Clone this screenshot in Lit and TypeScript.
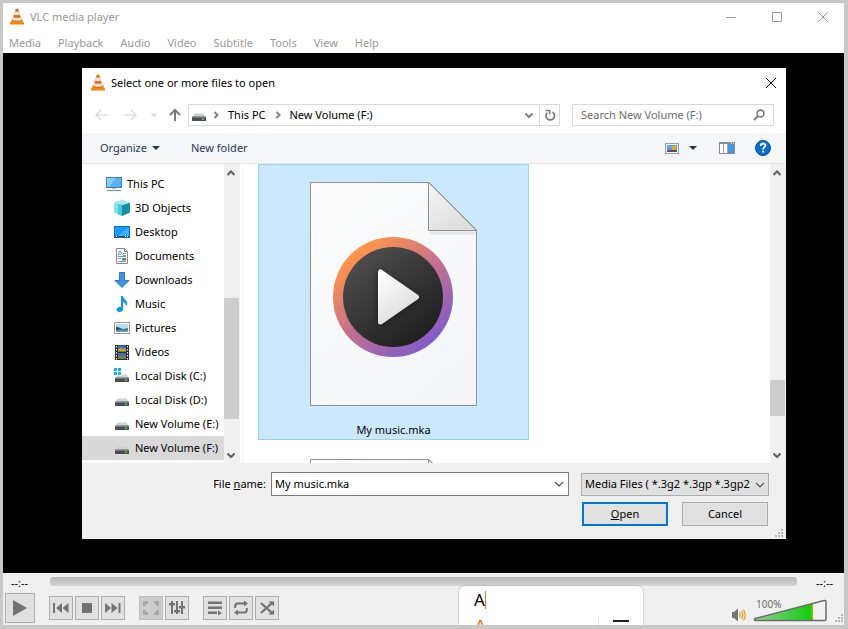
import { LitElement, html, css, svg, TemplateResult } from "lit";
import { customElement, property } from "lit/decorators.js";
import { classMap } from "lit/directives/class-map.js";
import { styleMap } from "lit/directives/style-map.js";

const cone = html`<svg width="16" height="18" viewBox="0 0 16 18" aria-hidden="true">
  <path d="M3 10.500h10L15 15.500H1z" fill="#f7a21f"/>
  <path d="M1 14.500h14V16.500H1z" fill="#e8850f"/>
  <path d="M6.800.8h2.400l3.800 12.200c-2 1.600-8 1.600-10 0z" fill="#ea6c10"/>
  <path d="M5.900 3.800h4.200l1 3c-1.600.6-4.600.6-6.200 0z" fill="#e9e9e9"/>
  <path d="M4.100 9.200c2 .8 5.800.8 7.800 0l.9 2.700c-2.400 1.100-7.200 1.100-9.600 0z" fill="#dfe3e6"/>
</svg>`;

const drive = html`<svg width="16" height="16" viewBox="0 0 16 16" aria-hidden="true">
  <path d="M3.500 6.500h9l2.300 3.500H1.200z" fill="#cfd2d4"/>
  <rect x="1" y="9.500" width="14" height="4.500" rx=".6" fill="#4b4d50"/>
  <path d="M1 9.500h14v1H1z" fill="#a5a8ab"/>
  <rect x="11" y="11.500" width="2" height="1.500" fill="#3fe04a"/>
</svg>`;

const systemDrive = html`<svg width="16" height="16" viewBox="0 0 16 16" aria-hidden="true">
  <path d="M0 0h3v3H0zM4 0h3v3H4zM0 4h3v3H0zM4 4h3v3H4z" fill="#19b5ea"/>
  <path d="M8 6.500h4.500l2.300 3.500H1.200L2.800 8H8z" fill="#cfd2d4"/>
  <rect x="1" y="9.500" width="14" height="4.500" rx=".6" fill="#4b4d50"/>
  <path d="M1 9.500h14v1H1z" fill="#a5a8ab"/>
  <rect x="11" y="11.500" width="2" height="1.500" fill="#3fe04a"/>
</svg>`;

const picture = html`<svg width="16" height="16" viewBox="0 0 16 16" aria-hidden="true">
  <rect x=".5" y="2.500" width="15" height="11" fill="#fff" stroke="#9a9a9a"/>
  <path d="M2 4h12v4H2z" fill="#b5daf5"/>
  <path d="M2 7l4 .8 3 1L14 8v4H2z" fill="#3f7f8c"/>
  <path d="M2 6.500l3.500 1.500L8 9.500 2 10z" fill="#2d5b4c"/>
  <path d="M2 10.500h12V12H2z" fill="#6aa9d4"/>
</svg>`;

const treeIcons: Record<string, TemplateResult> = {
  pc: html`<svg width="16" height="16" viewBox="0 0 16 16" aria-hidden="true">
    <rect x=".5" y="1.500" width="15" height="10" fill="#56b4f5" stroke="#4d7ea6"/>
    <path d="M1 2h9L3 11H1z" fill="#86cdfa"/>
    <path d="M6 12h4v1H6z" fill="#9fc0d8"/>
    <path d="M1 14.500h14" stroke="#6d8dab"/>
  </svg>`,
  cube: html`<svg width="16" height="16" viewBox="0 0 16 16" aria-hidden="true">
    <path d="M0 2.500L8 5v11l-8-3.500z" fill="#7de0ea"/>
    <path d="M8 5l8-2.500v10L8 16z" fill="#1291a8"/>
    <path d="M8 0l8 2.500L8 5 0 2.500z" fill="#a3e6ec"/>
    <path d="M4 4l4 1v11l-4-1.800z" fill="#45c8d8"/>
  </svg>`,
  desktop: html`<svg width="16" height="16" viewBox="0 0 16 16" aria-hidden="true">
    <rect x=".5" y="2.500" width="15" height="11" fill="#1b9bf8" stroke="#0c6cc0"/>
    <path d="M15 3v9H4z" fill="#3fb0ff"/>
    <path d="M1 12.500h14" stroke="#083a66"/>
    <path d="M2 12.500h1m8 0h1m1 0h1" stroke="#fff"/>
  </svg>`,
  document: html`<svg width="16" height="16" viewBox="0 0 16 16" aria-hidden="true">
    <path d="M2.500.5h8l3 3v12h-11z" fill="#fff" stroke="#8a8a8a"/>
    <path d="M10.500.5v3h3" fill="none" stroke="#8a8a8a"/>
    <path d="M4 6.500h3M9 5.500h3M9 7.500h3M4 8.500h8M4 13.500h8" stroke="#7b95aa"/>
    <path d="M4.500 5.500L6 3l1.500 2.500" fill="none" stroke="#2a7fc4"/>
    <path d="M4 10.500h3" stroke="#7b95aa"/><path d="M8 10h4v2.500H8z" fill="#4d8f86"/>
  </svg>`,
  download: html`<svg width="16" height="16" viewBox="0 0 16 16" aria-hidden="true">
    <path d="M5.500.5h5v8h4.500L8 15.500 1 8.500h4.500z" fill="#3c94e4" stroke="#2c78c4"/>
  </svg>`,
  music: html`<svg width="16" height="16" viewBox="0 0 16 16" aria-hidden="true">
    <path d="M7 0h2c.3 3 4.500 4.500 4.200 7.500-.1 1.300-.8 2.200-1.500 2.800.6-2.500-.8-3.800-2.700-4.300V13c0 1.800-1.500 3-3.500 3S2.500 15 2.500 13.600s1.500-2.600 3-2.600c.6 0 1.100.1 1.500.3z" fill="#1294ea"/>
  </svg>`,
  picture,
  video: html`<svg width="16" height="16" viewBox="0 0 16 16" aria-hidden="true">
    <path d="M1 1h14v15H1z" fill="#2e2e2e"/>
    <path d="M4 1.500h8v6H4zM4 9h8v6H4z" fill="#3b6fc4"/>
    <path d="M4 5.500l3-2 2 1.500 3-1v3.500H4z" fill="#c8a021"/>
    <path d="M4 12l4-1 4 2v2H4z" fill="#6a7e49"/>
    <path d="M2.500 2v14M13.500 2v14" stroke="#f0f0f0" stroke-dasharray="1.500 1.500"/>
  </svg>`,
  system: systemDrive,
  drive,
};

const chevron = (direction: "up" | "down" | "right", color = "#606060") => {
  const d = { up: "M1.500 7L5 3.500 8.500 7", down: "M1.500 3.500L5 7l3.500-3.500", right: "M3.500 2L6.500 5l-3 3" }[direction];
  return html`<svg width="10" height="10" viewBox="0 0 10 10" aria-hidden="true">
    <path d=${d} fill="none" stroke=${color} stroke-width="2"/>
  </svg>`;
};

const thinChevron = html`<svg width="10" height="10" viewBox="0 0 10 10" aria-hidden="true">
  <path d="M1 3l4 4 4-4" fill="none" stroke="#505050" stroke-width="1.200"/>
</svg>`;

const caret = html`<svg width="8" height="6" viewBox="0 0 8 6" aria-hidden="true">
  <path d="M0 1h8L4 5z" fill="#1e395b"/>
</svg>`;

const grip = html`<svg width="9" height="9" viewBox="0 0 9 9" aria-hidden="true">
  <path d="M6 0h2v2H6zM3 3h2v2H3zM6 3h2v2H6zM0 6h2v2H0zM3 6h2v2H3zM6 6h2v2H6z" fill="#b8b8b8"/>
</svg>`;

const base = css`
  *, *::before, *::after { box-sizing: border-box; }
  :host { font-family: "Noto Sans", "Open Sans", sans-serif; font-size: 11px; line-height: 16px; }
  button, input, select { font: inherit; color: inherit; margin: 0; padding: 0; border: 0; border-radius: 0; background: none; outline: none; }
  button { display: flex; align-items: center; justify-content: center; white-space: nowrap; }
  svg { display: block; flex: none; }
`;

@customElement("scroll-bar")
export class ScrollBar extends LitElement {
  @property({ type: Number }) before = 1;
  @property({ type: Number }) thumb = 1;
  @property({ type: Number }) after = 1;

  static styles = [base, css`
    :host { display: flex; flex-direction: column; flex: none; width: 16px; background: #f0f0f0; }
    button { width: 14px; height: 17px; flex: none; }
    .thumb { width: 15px; background: #cdcdcd; }
  `];

  render() {
    return html`
      <button aria-label="Scroll up">${chevron("up")}</button>
      <div style=${styleMap({ flexGrow: String(this.before) })}></div>
      <div class="thumb" style=${styleMap({ flexGrow: String(this.thumb) })}></div>
      <div style=${styleMap({ flexGrow: String(this.after) })}></div>
      <button aria-label="Scroll down">${chevron("down")}</button>`;
  }
}

@customElement("file-tile")
export class FileTile extends LitElement {
  @property() name = "";
  @property({ type: Boolean, reflect: true }) selected = false;

  static styles = [base, css`
    :host { display: block; width: 271px; flex: none; }
    .tile { width: 100%; height: 276px; flex-direction: column; justify-content: flex-start; padding-top: 17px; gap: 16px; border: 1px solid transparent; color: #000; }
    .selected { background: #cce8ff; border-color: #99d1ff; }
  `];

  render() {
    return html`<button class=${classMap({ tile: true, selected: this.selected })}>
      <svg width="167" height="224" viewBox="0 0 167 224" aria-hidden="true">
        <defs>
          <linearGradient id="paper" x1="0" y1="0" x2=".6" y2="1"><stop stop-color="#fdfdfd"/><stop offset="1" stop-color="#f3f5f8"/></linearGradient>
          <linearGradient id="fold" x1="0" y1="0" x2=".7" y2="1"><stop stop-color="#f6f6f6"/><stop offset="1" stop-color="#dcdcdc"/></linearGradient>
          <linearGradient id="ring" x1=".2" y1=".12" x2=".8" y2=".88"><stop stop-color="#ff954a"/><stop offset=".5" stop-color="#c4708e"/><stop offset="1" stop-color="#855dc8"/></linearGradient>
          <linearGradient id="disc" x1=".2" y1=".1" x2=".8" y2=".9"><stop stop-color="#4b4b4b"/><stop offset="1" stop-color="#1f1f1f"/></linearGradient>
          <linearGradient id="play" x1="0" y1="0" x2=".5" y2="1"><stop stop-color="#fff"/><stop offset="1" stop-color="#dedede"/></linearGradient>
          <filter id="shade" x="-30%" y="-30%" width="160%" height="160%"><feDropShadow dx="0" dy="1" stdDeviation="3" flood-color="#000" flood-opacity=".5"/></filter>
        </defs>
        <path d="M.5.5h118.500l47.500 47.500v175.500H.5z" fill="url(#paper)" stroke="#8e9194"/>
        <path d="M119 49.500h47l-1 3h-44z" fill="#000" opacity=".08"/>
        <path d="M118.500.5v48h48z" fill="url(#fold)" stroke="#8e8e8e"/>
        <circle cx="83" cy="115" r="60" fill="url(#ring)"/>
        <circle cx="83" cy="115" r="50" fill="url(#disc)"/>
        <path d="M70.500 90v50l36-25z" fill="url(#play)" stroke="url(#play)" stroke-width="5" stroke-linejoin="round" filter="url(#shade)"/>
      </svg>
      <span>${this.name}</span>
    </button>`;
  }
}

const places = [
  ["pc", "This PC"], ["cube", "3D Objects"], ["desktop", "Desktop"], ["document", "Documents"],
  ["download", "Downloads"], ["music", "Music"], ["picture", "Pictures"], ["video", "Videos"],
  ["system", "Local Disk (C:)"], ["drive", "Local Disk (D:)"], ["drive", "New Volume (E:)"], ["drive", "New Volume (F:)"],
];

@customElement("open-dialog")
export class OpenDialog extends LitElement {
  static styles = [base, css`
    :host { display: flex; flex-direction: column; position: relative; background: #fff; color: #000; min-width: 0; }
    .title { display: flex; align-items: center; height: 30px; padding: 0 9px 0 8px; gap: 5px; }
    .title h2 { flex: 1; margin: 0; font-size: 11px; font-weight: 400; }
    .close { width: 12px; height: 12px; }
    .nav { display: flex; align-items: center; height: 35px; padding: 0 12px 2px 4px; }
    .step { width: 30px; height: 22px; }
    .recent { width: 16px; height: 22px; }
    .up { width: 26px; height: 22px; }
    .path { display: flex; align-items: center; flex: 1; height: 22px; border: 1px solid #d9d9d9; padding-left: 2px; }
    .path > svg:first-of-type { margin-right: 4px; }
    .crumb { padding: 0 7px; }
    .drop { margin-left: auto; width: 20px; height: 20px; }
    .refresh { width: 20px; height: 20px; border-left: 1px solid #d9d9d9; }
    .search { display: flex; align-items: center; width: 202px; height: 22px; margin-left: 12px; padding: 0 8px; border: 1px solid #d9d9d9; }
    .search input { flex: 1; min-width: 0; }
    .search input::placeholder { color: #6d6d6d; opacity: 1; }
    .tools { display: flex; align-items: center; height: 31px; padding: 0 15px 0 18px; background: #f5f6f7; border-bottom: 1px solid #e5e6e8; color: #1e395b; }
    .organize { gap: 5px; margin-right: 31px; }
    .view { gap: 10px; margin-left: auto; }
    .preview { margin: 0 20px 0 22px; }
    .body { display: flex; flex: 1 1 0; min-height: 0; overflow: hidden; }
    .tree { width: 142px; flex: none; padding: 8px 0 0; margin: 0; list-style: none; }
    .place { width: 100%; height: 24px; justify-content: flex-start; gap: 5px; padding-left: 32px; }
    .root { padding-left: 24px; }
    .current { background: #d9d9d9; }
    .files { flex: 1; min-width: 0; display: flex; flex-direction: column; gap: 1px; margin-left: 2px; padding-left: 15px; border-left: 1px solid #f5f5f5; overflow: hidden; }
    .foot { position: relative; display: flex; flex-direction: column; gap: 6px; height: 76px; padding: 9px 17px 0 0; background: #f0f0f0; }
    .row { display: flex; align-items: center; }
    .name-label { width: 184px; text-align: right; margin-right: 5px; }
    .combo { display: flex; flex: 1; height: 24px; background: #fff; border: 1px solid #7a7a7a; margin-right: 12px; }
    .combo input { flex: 1; min-width: 0; padding-left: 3px; }
    .combo button { width: 18px; }
    .type { position: relative; width: 188px; }
    .type select { appearance: none; display: block; width: 100%; height: 23px; padding: 0 18px 0 3px; background: #e1e1e1; border: 1px solid #adadad; }
    .type svg { position: absolute; right: 4px; top: 7px; pointer-events: none; }
    .actions { justify-content: flex-end; gap: 14px; padding-right: 1px; }
    .action { width: 86px; height: 24px; background: #e1e1e1; border: 1px solid #adadad; }
    .primary { border: 2px solid #0078d7; }
    .grip { position: absolute; right: 2px; bottom: 1px; }
  `];

  render() {
    return html`
      <div class="title">${cone}<h2>Select one or more files to open</h2>
        <button class="close" aria-label="Close"><svg width="12" height="12" viewBox="0 0 12 12"><path d="M1 1l10 10M11 1L1 11" stroke="#000"/></svg></button>
      </div>
      <div class="nav">
        <button class="step" aria-label="Back"><svg width="14" height="14" viewBox="0 0 14 14"><path d="M13 7H2M7 2L2 7l5 5" fill="none" stroke="#dadada" stroke-width="1.500"/></svg></button>
        <button class="step" aria-label="Forward"><svg width="14" height="14" viewBox="0 0 14 14"><path d="M1 7h11M7 2l5 5-5 5" fill="none" stroke="#dadada" stroke-width="1.500"/></svg></button>
        <button class="recent" aria-label="Recent locations"><svg width="8" height="8" viewBox="0 0 8 8"><path d="M1.500 2.500L4 5l2.500-2.500" fill="none" stroke="#d4d4d4" stroke-width="1.500"/></svg></button>
        <button class="up" aria-label="Up"><svg width="14" height="14" viewBox="0 0 14 14"><path d="M7 13V2M2 7l5-5 5 5" fill="none" stroke="#7a7a7a" stroke-width="2"/></svg></button>
        <div class="path">
          ${drive}${chevron("right", "#808080")}
          <button class="crumb">This PC</button>${chevron("right", "#808080")}
          <button class="crumb">New Volume (F:)</button>
          <button class="drop" aria-label="Previous locations">${chevron("down", "#808080")}</button>
          <button class="refresh" aria-label="Refresh"><svg width="12" height="14" viewBox="0 0 12 14"><path d="M8.500 4A4.300 4.300 0 1 1 3.300 4.500" fill="none" stroke="#7a7a7a" stroke-width="1.700"/><path d="M1.500 2.500h4.200v4" fill="none" stroke="#7a7a7a" stroke-width="1.500"/></svg></button>
        </div>
        <label class="search"><input aria-label="Search" placeholder="Search New Volume (F:)">
          <svg width="12" height="12" viewBox="0 0 12 12"><circle cx="7.500" cy="4.500" r="3.400" fill="none" stroke="#7a7a7a" stroke-width="1.600"/><path d="M5 7L1 11" stroke="#7a7a7a" stroke-width="2"/></svg>
        </label>
      </div>
      <div class="tools">
        <button class="organize">Organize ${caret}</button>
        <button>New folder</button>
        <button class="view" aria-label="Change view"><svg width="14" height="11" viewBox="0 0 14 11"><rect x=".5" y=".5" width="13" height="10" fill="#fff" stroke="#9a9a9a"/><path d="M2 2h10v7H2z" fill="#5aa5e6"/><path d="M2 7h10v2H2z" fill="#44536c"/><path d="M7 3h4v4H7z" fill="#d9b02a"/><path d="M3 6h2v2H3z" fill="#a64b9e"/></svg>${caret}</button>
        <button class="preview" aria-label="Preview pane"><svg width="16" height="12" viewBox="0 0 16 12"><rect x=".5" y=".5" width="15" height="11" fill="#fff" stroke="#858c92"/><path d="M0 0h16v2H0z" fill="#858c92"/><path d="M4.500 2v9M8.500 2v9" stroke="#a5abb0"/><path d="M9 2h6v9H9z" fill="#3e97e0"/><path d="M12 1h1m1 0h1" stroke="#fff"/></svg></button>
        <button aria-label="Help"><svg width="16" height="16" viewBox="0 0 16 16"><circle cx="8" cy="8" r="7.500" fill="#0a6cce" stroke="#064e9c"/><path d="M5.700 5.900c0-3.200 4.900-3.100 4.700-.4-.1 1.600-2.300 1.800-2.300 3.900" fill="none" stroke="#fff" stroke-width="1.800"/><path d="M7.100 10.700h2v1.800h-2z" fill="#fff"/></svg></button>
      </div>
      <div class="body">
        <ul class="tree">
          ${places.map(([icon, label], i) => html`<li><button class=${classMap({ place: true, root: i === 0, current: i === places.length - 1 })}>${treeIcons[icon]}${label}</button></li>`)}
        </ul>
        <scroll-bar .before=${117} .thumb=${121} .after=${27}></scroll-bar>
        <div class="files">
          <file-tile name="My music.mka" selected></file-tile>
          <file-tile></file-tile>
        </div>
        <scroll-bar .before=${199} .thumb=${36} .after=${30}></scroll-bar>
      </div>
      <div class="foot">
        <div class="row">
          <label class="name-label" for="name">File <u>n</u>ame:</label>
          <div class="combo"><input id="name" value="My music.mka"><button aria-label="Show file names">${thinChevron}</button></div>
          <div class="type"><select aria-label="File type"><option>Media Files ( *.3g2 *.3gp *.3gp2 *.3gpp *.amv)</option></select>${thinChevron}</div>
        </div>
        <div class="row actions"><button class="action primary"><span><u>O</u>pen</span></button><button class="action">Cancel</button></div>
        <div class="grip">${grip}</div>
      </div>`;
  }
}

const controls: { label: string; off?: boolean; art: TemplateResult }[][] = [
  [
    { label: "Previous", art: svg`<path d="M0 3h2v10H0zM9 3v10L3 8zM15.500 3v10l-6-5z"/>` },
    { label: "Stop", art: svg`<path d="M3 3h10v10H3z"/>` },
    { label: "Next", art: svg`<path d="M13.500 3h2v10h-2zM6.500 3v10l6-5zM0 3v10l6-5z"/>` },
  ],
  [
    { label: "Fullscreen", off: true, art: svg`<path d="M0 1h5v3H3v2H0zM16 1h-5v3h2v2h3zM0 15h5v-3H3v-2H0zM16 15h-5v-3h2v-2h3z"/>` },
    { label: "Extended settings", art: svg`<path d="M2 1h2v13H2zM7 1h2v13H7zM12 1h2v13h-2zM0 3h6v2.500H0zM5 10h6v2.500H5zM10 6h6v2.500h-6z"/>` },
  ],
  [
    { label: "Playlist", art: svg`<path d="M1 1.500h14V4H1zM1 6.500h14V9H1zM1 11.500h9V14H1zM11 10.500v5l4-2.500z"/>` },
    { label: "Loop", art: svg`<path d="M2.200 8V6q0-2.500 2.500-2.500H12M13.800 8v2q0 2.500-2.500 2.500H4" fill="none" stroke="#737373" stroke-width="2"/><path d="M11 .5v6l4-3zM5 9.500v6l-4-3z"/>` },
    { label: "Random", art: svg`<path d="M2 3l11 10M2 13L13 3" fill="none" stroke="#737373" stroke-width="2.200"/><path d="M9.500 1.500H15v5zM9.500 14.500H15v-5z"/>` },
  ],
];

@customElement("player-controls")
export class PlayerControls extends LitElement {
  static styles = [base, css`
    :host { display: block; position: relative; background: #f0f0f0; color: #000; height: 52px; overflow: hidden; }
    .timeline { display: flex; align-items: center; height: 20px; padding: 0 8px; gap: 19px; }
    .time { width: 20px; white-space: nowrap; }
    .track { flex: 1; height: 9px; margin-bottom: 4px; border-radius: 3px; background: linear-gradient(#b8b8b8, #d6d6d6); }
    .bar { display: flex; align-items: center; height: 30px; padding: 0 0 0 2px; gap: 14px; }
    .group { display: flex; gap: 2px; }
    .control { width: 24px; height: 24px; background: #e1e1e1; border: 1px solid #adadad; }
    .play { width: 30px; height: 30px; }
    .off { background: #cccccc; border-color: #bfbfbf; }
    .volume { position: relative; display: flex; align-items: flex-end; gap: 6px; margin-left: auto; padding-top: 5px; margin-right: 17px; }
    .percent { position: absolute; left: 24px; top: 2px; color: #6b6b6b; font-size: 10px; }
    .grip { position: absolute; right: 0; bottom: 2px; }
    .popup { position: absolute; left: 456px; top: 13px; width: 184px; height: 52px; background: #fff; border-radius: 6px; box-shadow: 0 0 2px rgba(0, 0, 0, .35); }
    .typed { display: flex; align-items: center; height: 28px; padding-left: 15px; font-size: 17px; line-height: 20px; }
    .typed::after { content: ""; width: 1px; height: 18px; background: #f3701e; }
    .choices { display: flex; align-items: flex-start; padding: 2px 14px 0 17px; }
    .choice { color: #f3701e; font-size: 13px; font-weight: 600; }
    .rule { width: 1px; height: 20px; margin-left: auto; background: #e6e6e6; }
    .menu { width: 16px; height: 2px; margin: 4px 0 0 14px; background: #202020; }
  `];

  render() {
    return html`
      <div class="timeline"><span class="time">--:--</span><div class="track"></div><span class="time">--:--</span></div>
      <div class="bar">
        <button class="control play" aria-label="Play"><svg width="16" height="18" viewBox="0 0 16 18"><path d="M1 1l14 8-14 8z" fill="#737373"/></svg></button>
        ${controls.map((group) => html`<div class="group">${group.map((c) => html`
          <button class=${classMap({ control: true, off: !!c.off })} aria-label=${c.label}><svg width="16" height="16" viewBox="0 0 16 16" fill=${c.off ? "#a8a8a8" : "#737373"}>${c.art}</svg></button>`)}</div>`)}
        <div class="volume">
          <svg width="15" height="14" viewBox="0 0 15 14" role="img" aria-label="Volume"><path d="M0 4h2l4-3.500v13L2 10H0z" fill="#777"/><path d="M7.500 4.500q1.500 2.500 0 5M9.500 3q2.500 4 0 8M11.500 1.500q3.500 5.500 0 11" fill="none" stroke="#f59a22" stroke-width="1.300"/></svg>
          <svg width="74" height="23" viewBox="0 0 74 23" aria-hidden="true">
            <defs><linearGradient id="level"><stop stop-color="#8fd08f"/><stop offset=".8" stop-color="#28cc28"/><stop offset=".95" stop-color="#10d010"/><stop offset="1" stop-color="#9ab800"/></linearGradient></defs>
            <path d="M1 20L60 4.500V22H1z" fill="url(#level)"/>
            <path d="M2 19.500L71 1.500q2-.5 2 1.500v17q0 1.500-1.500 1.500H2.500q-2-1-.5-2z" fill="none" stroke="#6b6b6b" stroke-width="1.500"/>
          </svg>
          <span class="percent">100%</span>
        </div>
      </div>
      <div class="popup">
        <div class="typed">A</div>
        <div class="choices"><span class="choice">A</span><span class="rule"></span><span class="menu"></span></div>
      </div>
      <div class="grip">${grip}</div>`;
  }
}

@customElement("app-root")
export class AppRoot extends LitElement {
  static styles = [base, css`
    :host { display: flex; flex-direction: column; min-height: 100vh; border: solid #c8c8c8; border-width: 3px 4px 4px 3px; background: #fff; box-sizing: border-box; color: #999; }
    .title { display: flex; align-items: center; height: 29px; padding: 0 15px 2px 6px; gap: 5px; }
    .title h1 { flex: 1; margin: 0; font-size: 11px; font-weight: 400; }
    .window-buttons { display: flex; gap: 34px; }
    .menus { display: flex; height: 21px; padding-left: 6px; gap: 17px; }
    .stage { display: flex; flex: 1; padding: 15px 58px 34px 79px; background: #000; }
    open-dialog { flex: 1; }
  `];

  render() {
    return html`
      <header>
        <div class="title">${cone}<h1>VLC media player</h1>
          <div class="window-buttons">
            <button aria-label="Minimize"><svg width="12" height="12" viewBox="0 0 12 12"><path d="M1 6.500h10" stroke="#999"/></svg></button>
            <button aria-label="Maximize"><svg width="12" height="12" viewBox="0 0 12 12"><path d="M1.500 1.500h9v9h-9z" fill="none" stroke="#999"/></svg></button>
            <button aria-label="Close"><svg width="12" height="12" viewBox="0 0 12 12"><path d="M1 1l10 10M11 1L1 11" stroke="#999"/></svg></button>
          </div>
        </div>
        <nav class="menus">${["Media", "Playback", "Audio", "Video", "Subtitle", "Tools", "View", "Help"].map((m) => html`<button>${m}</button>`)}</nav>
      </header>
      <main class="stage"><open-dialog role="dialog" aria-label="Select one or more files to open"></open-dialog></main>
      <player-controls></player-controls>`;
  }
}
